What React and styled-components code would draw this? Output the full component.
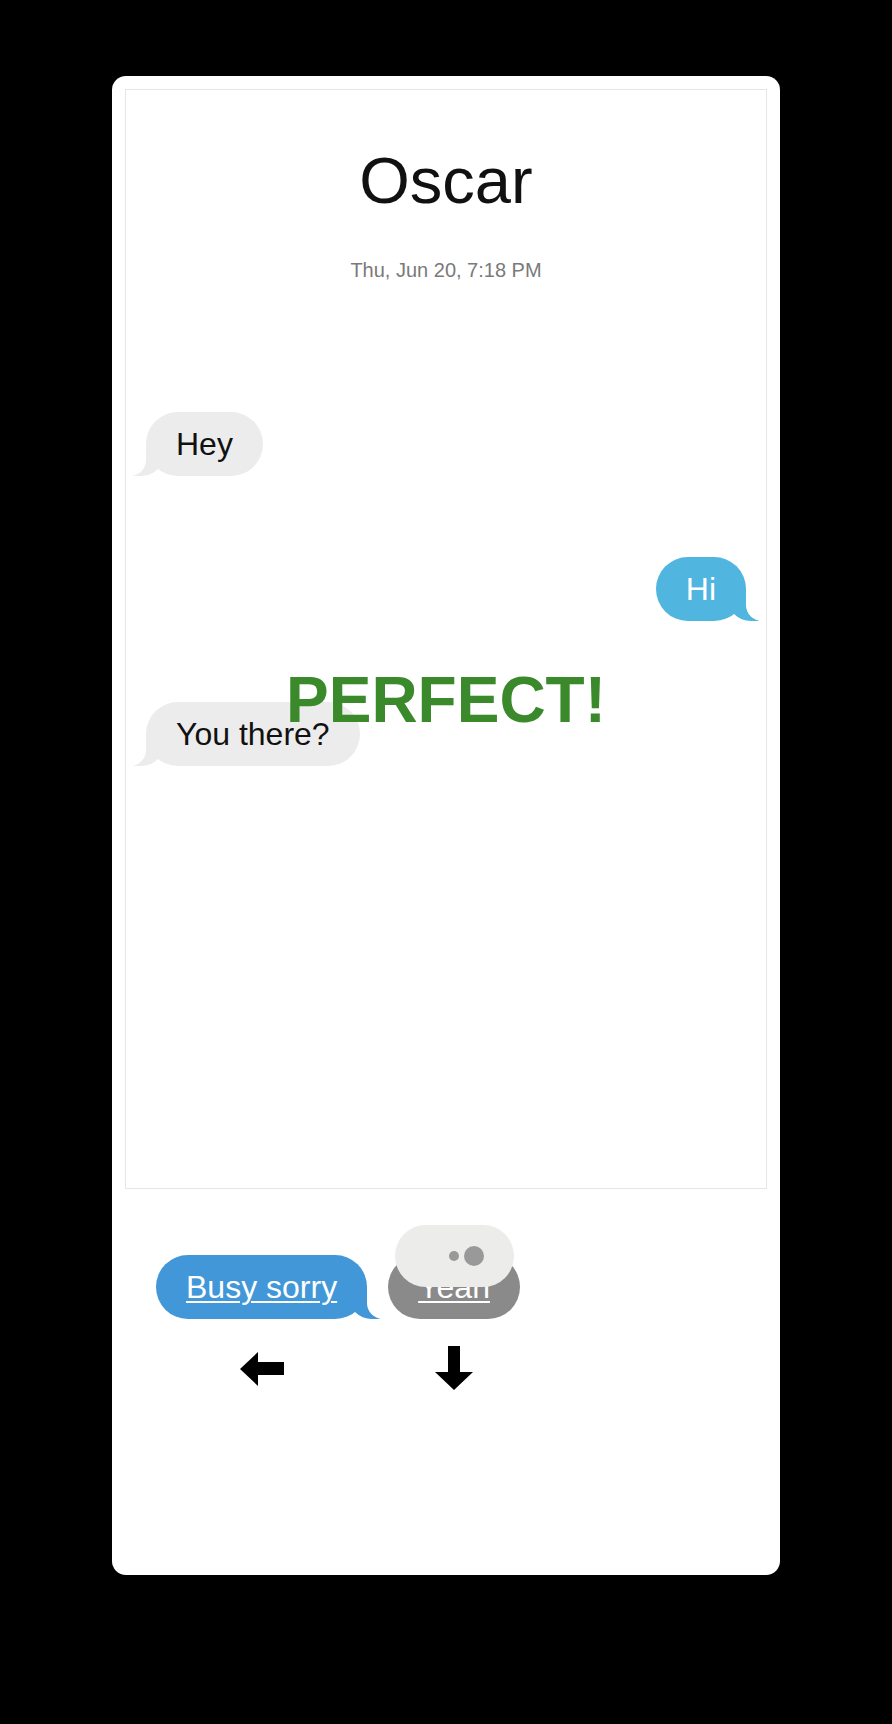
import React from "react";
import styled, { createGlobalStyle, css } from "styled-components";

const GlobalStyle = createGlobalStyle`
  html, body {
    margin: 0;
    padding: 0;
    background: #000;
  }
  body {
    font-family: "Liberation Sans", Helvetica, Arial, sans-serif;
  }
  * {
    box-sizing: border-box;
  }
`;

const Card = styled.div`
  position: relative;
  width: 668px;
  height: 1499px;
  margin: 76px auto 0;
  padding: 13px;
  background: #fff;
  border-radius: 14px;
`;

const Thread = styled.section`
  height: 1100px;
  border: 1px solid #e6e6e6;
  padding: 53px 20px 0;
  display: flex;
  flex-direction: column;
`;

const Title = styled.h1`
  margin: 0;
  font-size: 65px;
  line-height: 76px;
  font-weight: 400;
  color: #111;
  text-align: center;
`;

const Stamp = styled.div`
  margin-top: 40px;
  font-size: 20px;
  line-height: 23px;
  color: #7a7a7a;
  text-align: center;
`;

const Messages = styled.div`
  margin-top: 130px;
  display: flex;
  flex-direction: column;
  gap: 81px;
`;

const tailRight = (color) => css`
  &::before {
    content: "";
    position: absolute;
    z-index: 0;
    bottom: 0;
    right: -13px;
    width: 32px;
    height: 32px;
    background: ${color};
    border-bottom-left-radius: 24px;
  }
  &::after {
    content: "";
    position: absolute;
    z-index: 1;
    bottom: 0;
    right: -16px;
    width: 16px;
    height: 32px;
    background: #fff;
    border-bottom-left-radius: 16px;
  }
`;

const tailLeft = (color) => css`
  &::before {
    content: "";
    position: absolute;
    z-index: 0;
    bottom: 0;
    left: -13px;
    width: 32px;
    height: 32px;
    background: ${color};
    border-bottom-right-radius: 24px;
  }
  &::after {
    content: "";
    position: absolute;
    z-index: 1;
    bottom: 0;
    left: -16px;
    width: 16px;
    height: 32px;
    background: #fff;
    border-bottom-right-radius: 16px;
  }
`;

const Bubble = styled.div`
  position: relative;
  align-self: ${(p) => (p.$me ? "flex-end" : "flex-start")};
  padding: 13px 30px;
  font-size: 32px;
  line-height: 38px;
  border-radius: 32px;
  background: ${(p) => (p.$me ? "#50b5df" : "#ececec")};
  color: ${(p) => (p.$me ? "#fff" : "#111")};
  ${(p) => (p.$me ? tailRight("#50b5df") : tailLeft("#ececec"))}
`;

const Replies = styled.div`
  margin-top: 66px;
  padding-left: 31px;
  display: flex;
  align-items: flex-start;
  gap: 21px;
`;

const ReplyColumn = styled.div`
  display: flex;
  flex-direction: column;
  align-items: center;
  gap: 27px;
`;

const Reply = styled.a`
  position: relative;
  display: block;
  padding: 13px 30px;
  font-size: 32px;
  line-height: 38px;
  border-radius: 32px;
  color: #fff;
  text-decoration: underline;
  text-decoration-thickness: 2px;
  text-underline-offset: 3px;
  background: ${(p) => p.$color};
  cursor: pointer;
  ${(p) => p.$tail && tailRight(p.$color)}
`;

const Typing = styled.div`
  position: absolute;
  z-index: 2;
  top: -30px;
  left: 7px;
  width: 119px;
  height: 62px;
  border-radius: 31px;
  background: #ececea;
  display: flex;
  align-items: center;
  justify-content: center;
  gap: 5px;
  padding-left: 24px;
`;

const Dot = styled.span`
  width: ${(p) => p.$size}px;
  height: ${(p) => p.$size}px;
  border-radius: 50%;
  background: #999;
`;

const Arrow = styled.svg`
  display: block;
  width: 44px;
  height: 44px;
`;

const Verdict = styled.div`
  position: absolute;
  z-index: 10;
  top: 592px;
  left: 0;
  right: 0;
  text-align: center;
  font-size: 64px;
  line-height: 1;
  font-weight: 700;
  color: #3a8a2b;
  pointer-events: none;
`;

const messages = [
  { text: "Hey", me: false },
  { text: "Hi", me: true },
  { text: "You there?", me: false },
];

export default function App() {
  return (
    <>
      <GlobalStyle />
      <Card>
        <Thread>
          <Title>Oscar</Title>
          <Stamp>Thu, Jun 20, 7:18 PM</Stamp>
          <Messages>
            {messages.map((m) => (
              <Bubble key={m.text} $me={m.me}>
                {m.text}
              </Bubble>
            ))}
          </Messages>
        </Thread>
        <Replies>
          <ReplyColumn>
            <Reply $color="#4197d8" $tail>
              Busy sorry
            </Reply>
            <Arrow viewBox="0 0 44 44">
              <polygon points="0,23 18,6 18,16 44,16 44,29 18,29 18,40" fill="#000" />
            </Arrow>
          </ReplyColumn>
          <ReplyColumn>
            <Reply $color="#8a8a8a">
              Yeah
              <Typing>
                <Dot $size={10} />
                <Dot $size={20} />
              </Typing>
            </Reply>
            <Arrow viewBox="0 0 44 44">
              <polygon points="16,0 28,0 28,26 41,26 22,44 3,26 16,26" fill="#000" />
            </Arrow>
          </ReplyColumn>
        </Replies>
        <Verdict>PERFECT!</Verdict>
      </Card>
    </>
  );
}
